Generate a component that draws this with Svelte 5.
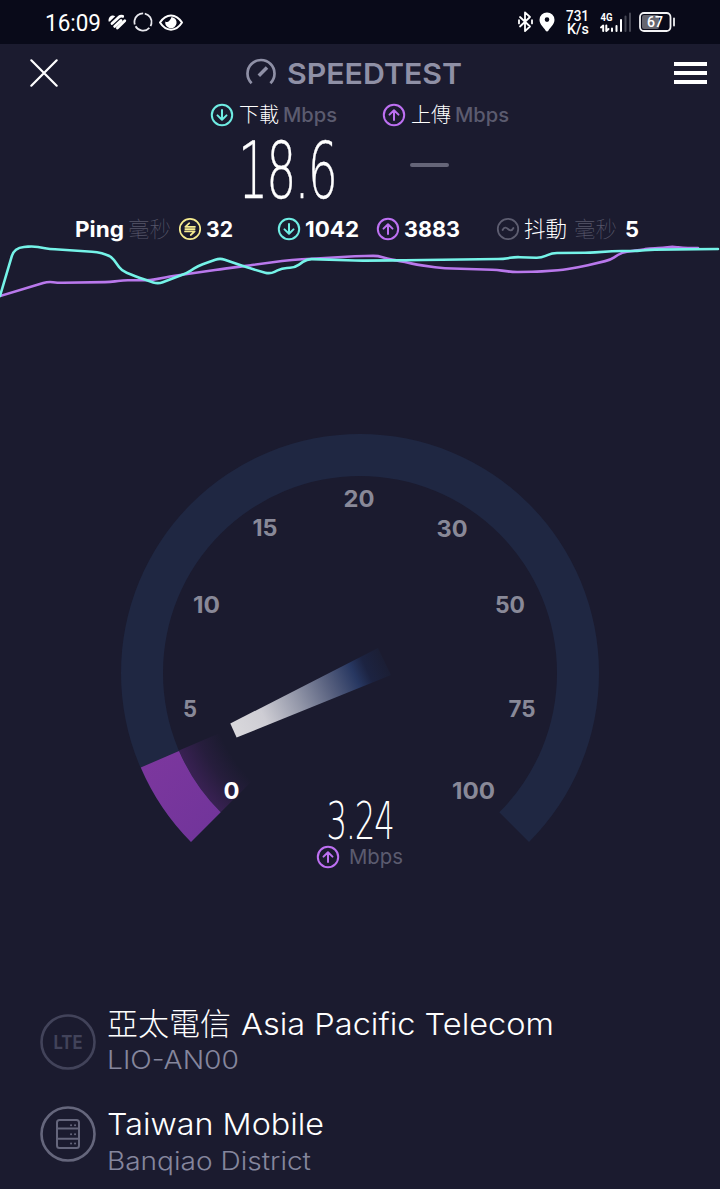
<script>
  const download = [[0,296],[13,252],[19,247.5],[33,246.2],[50,249],[97,252],[111,256],[122,271],[140,278],[158,284],[187,273],[198,266],[220,258],[247,267.5],[270,274],[282,268.3],[295,267.5],[307,259],[360,260.7],[400,260.3],[503,259],[515,257],[541,258],[552,253],[590,252.7],[617,251],[637,251],[650,249.7],[718,249]];
  const upload = [[0,296],[48,281.6],[58,282.8],[110,282],[123,280.3],[150,280.3],[170,276.5],[220,269.3],[247,265.7],[287,260.3],[307,259],[360,256],[378,255.8],[387,258.7],[400,261],[417,264.7],[440,268],[497,270],[513,272],[537,271.7],[563,270],[583,266.3],[610,260],[622,252.3],[640,250],[650,248.3],[663,248],[672,246.5],[683,248],[698,248]];

  function smooth(points) {
    let d = `M${points[0]}`;
    for (let i = 1; i < points.length - 1; i++) {
      const [px, py] = points[i - 1];
      const [x, y] = points[i];
      const [nx, ny] = points[i + 1];
      const a = Math.min(0.5, 5 / Math.hypot(x - px, y - py));
      const b = Math.min(0.5, 5 / Math.hypot(nx - x, ny - y));
      d += `L${x + (px - x) * a},${y + (py - y) * a}Q${x},${y} ${x + (nx - x) * b},${y + (ny - y) * b}`;
    }
    return d + `L${points[points.length - 1]}`;
  }

  const ticks = [
    ['0', 231.5, 791, 16, 'on'], ['5', 190, 708.5, 14, ''], ['10', 206.5, 604.5, 27, ''],
    ['15', 265, 528, 25, ''], ['20', 359, 498.5, 31, ''], ['30', 452, 529, 31, ''],
    ['50', 510, 604.5, 30, ''], ['75', 522, 708.5, 27, ''], ['100', 473.5, 791, 43, '']
  ];
</script>

{#snippet label(text, width, size, cls)}
  <svg class="label {cls}" {width} height={size} font-size={size}>
    <text x="0" y={size * 0.863} textLength={width} lengthAdjust="spacingAndGlyphs">{text}</text>
  </svg>
{/snippet}

{#snippet badge(kind)}
  <svg class="badge {kind}" width="24" height="24" viewBox="0 0 24 24">
    <circle cx="12" cy="12" r="10.2" />
    {#if kind === 'down'}
      <path d="M12 7v9.6M7.5 12.4l4.5 4.3 4.5-4.3" />
    {:else if kind === 'up'}
      <path d="M12 17V7.4M7.5 11.6L12 7.3l4.5 4.3" />
    {:else if kind === 'ping'}
      <path d="M17 9.8H7.3l4-3.6M7.3 12.1h9.4M7 14.4h9.7l-4 3.6" />
    {:else}
      <path d="M6.6 13c1.5-3.2 3.6-2.8 5.4-1s3.9 2.2 5.4-1" />
    {/if}
  </svg>
{/snippet}

<main>
  <div class="status">
    {@render label('16:09', 56, 24, 'clock')}
    <svg class="heart" width="19" height="17" viewBox="0 0 19 17">
      <path class="lobe" d="M.6 7.6C-.2 3.5 3.5.2 7.2 2.2L1.8 7.6Z" />
      <path d="M4 9.6L10.8 3.2q2-1.6 3.9-.8M6.6 12.4L13 6.4M9.4 14L16.8 6.8" />
    </svg>
    <svg class="ring" width="20" height="20" viewBox="0 0 20 20">
      <circle cx="10" cy="10" r="8.6" stroke-dasharray="16 2" transform="rotate(-78 10 10)" />
    </svg>
    <svg class="eye" width="24" height="17" viewBox="0 0 24 17">
      <path d="M1 8.5C7-1 17-1 23 8.5C17 18 7 18 1 8.5Z" />
      <path class="pupil" d="M12.5 2.9a5.7 5.7 0 1 1-6.2 4.6q2.1 1.3 3.8-.4t2.4-4.2Z" />
    </svg>
    <div class="right">
      <svg width="16" height="22" viewBox="0 0 16 22">
        <path class="bt" d="M3 6l10 9.5-5 4.6V1.4L13 6 3 15.5M2 9.2v3.2M15 9.2v3.2" />
      </svg>
      <svg class="pin" width="16" height="20" viewBox="0 0 16 20">
        <path fill-rule="evenodd" d="M8 .5a7.4 7.4 0 0 0-7.5 7.3C.5 12.5 5 15.5 6.5 18.5q1.5 2 3 0C11 15.5 15.5 12.5 15.5 7.8A7.4 7.4 0 0 0 8 .5ZM8 5.3a2.3 2.3 0 1 1 0 4.6 2.3 2.3 0 0 1 0-4.6Z" />
      </svg>
      <div class="rate">
        {@render label('731', 23, 15, 'rate-text')}
        {@render label('K/s', 22, 15, 'rate-text')}
      </div>
      <svg class="signal" width="32" height="20" viewBox="0 0 32 20">
        <text x="0.5" y="8.5" textLength="12" lengthAdjust="spacingAndGlyphs">4G</text>
        <path d="M1 15.4l2.2-1.8V19M6.3 13.5V19l2.2-2M12 19v-2.6M16.5 19v-5M21 19V8" />
        <path class="off" d="M25.5 19V4.5M30 19V1.5" />
      </svg>
      <svg class="battery" width="37" height="20" viewBox="0 0 37 20">
        <rect class="level" x="3" y="3" width="17" height="14" rx="2" />
        <rect x="1" y="1" width="30.5" height="18" rx="4" />
        <path d="M35 6.5v7" />
        <text x="8" y="15.2" textLength="16" lengthAdjust="spacingAndGlyphs">67</text>
      </svg>
    </div>
  </div>

  <header>
    <svg class="close" width="28" height="28" viewBox="0 0 28 28"><path d="M1.3 1.3l25.4 25.4M26.7 1.3L1.3 26.7" /></svg>
    <div class="brand">
      <svg width="32" height="28" viewBox="0 0 32 28">
        <path d="M6.6 24.2A13.5 13.5 0 1 1 25.4 24.2" />
        <path class="hand" d="M13.8 16.8L22 8.5" />
      </svg>
      {@render label('SPEEDTEST', 175, 29, 'semi')}
    </div>
    <div class="menu"><i></i><i></i><i></i></div>
  </header>

  <section class="results">
    <div class="result">
      <div class="caption">
        {@render badge('down')}
        {@render label('下載', 40, 20, 'cjk white')}
        {@render label('Mbps', 54, 20, 'unit')}
      </div>
      <div class="value">{@render label('18.6', 98, 78, 'digits')}</div>
    </div>
    <div class="result">
      <div class="caption">
        {@render badge('up')}
        {@render label('上傳', 40, 20, 'cjk white')}
        {@render label('Mbps', 54, 20, 'unit')}
      </div>
      <div class="dash"></div>
    </div>
  </section>

  <section class="latency">
    <div class="group">{@render label('Ping', 49, 21.5, 'bold')}{@render label('毫秒', 43, 21.5, 'cjk faint')}</div>
    <div class="group idle">{@render badge('ping')}{@render label('32', 27, 21.5, 'bold')}</div>
    <div class="group dl">{@render badge('down')}{@render label('1042', 54, 21.5, 'bold')}</div>
    <div class="group ul">{@render badge('up')}{@render label('3883', 56, 21.5, 'bold')}</div>
    <div class="group jitter">
      {@render badge('wave')}{@render label('抖動', 43, 21.5, 'cjk white')}
      {@render label('毫秒', 43, 21.5, 'cjk faint ms')}{@render label('5', 14, 21.5, 'bold five')}
    </div>
  </section>

  <svg class="chart" width="720" height="58" viewBox="0 243 720 58">
    <path stroke="#b978ec" d={smooth(upload)} />
    <path stroke="#75f3e8" d={smooth(download)} />
  </svg>

  <svg class="gauge" width="720" height="544" viewBox="0 301 720 544">
    <defs>
      <radialGradient id="glow" gradientUnits="userSpaceOnUse" cx="360" cy="673" r="198">
        <stop offset=".77" stop-color="#8d32b8" stop-opacity="0" />
        <stop offset=".88" stop-color="#8d32b8" stop-opacity=".1" />
        <stop offset="1" stop-color="#8d32b8" stop-opacity=".27" />
      </radialGradient>
      <linearGradient id="fill" x1="0" y1="0" x2="1" y2="1">
        <stop stop-color="#7d379e" /><stop offset="1" stop-color="#70349a" />
      </linearGradient>
      <linearGradient id="needle" gradientUnits="userSpaceOnUse" x1="233" y1="730" x2="385" y2="661">
        <stop offset="0" stop-color="#d9d8dc" /><stop offset=".2" stop-color="#cecdd4" />
        <stop offset=".43" stop-color="#9296a8" /><stop offset=".64" stop-color="#555e7d" />
        <stop offset=".8" stop-color="#273761" /><stop offset=".88" stop-color="#1c2341" />
        <stop offset="1" stop-color="#1b1e34" />
      </linearGradient>
    </defs>
    <path fill="#1f2742" d="M191 842A239 239 0 1 1 529 842L499.3 812.3A197 197 0 1 0 220.7 812.3Z" />
    <path fill="url(#glow)" d="M360 673L179 750.6A197 197 0 0 0 220.7 812.3Z" />
    <path fill="url(#fill)" d="M191 842A239 239 0 0 1 140.8 767.5L179 751A197 197 0 0 0 220.7 812.3Z" />
    <path fill="url(#needle)" d="M230.3 723.5L236.6 737.5L391 675L378 648Z" />
    {#each ticks as [text, x, y, w, cls]}
      <text class="tick {cls}" x={x - w / 2} y={y + 8.1} textLength={w} lengthAdjust="spacingAndGlyphs">{text}</text>
    {/each}
    <text class="current" x="326.5" y="839" textLength="67" lengthAdjust="spacingAndGlyphs">3.24</text>
  </svg>
  <div class="now">{@render badge('up')}{@render label('Mbps', 54, 20.5, 'unit light')}</div>

  <section class="providers">
    <div class="provider">
      <svg class="lte" width="56" height="56" viewBox="0 0 56 56">
        <circle cx="28" cy="28" r="26.5" />
        <text x="13.5" y="35" textLength="29" lengthAdjust="spacingAndGlyphs">LTE</text>
      </svg>
      <div class="names">
        <div class="name">{@render label('亞太電信', 124, 31, 'cjk white')}{@render label('Asia Pacific Telecom', 313, 30, 'title')}</div>
        {@render label('LIO-AN00', 132, 25, 'sub')}
      </div>
    </div>
    <div class="provider second">
      <svg class="server" width="56" height="56" viewBox="0 0 56 56">
        <circle cx="28" cy="28" r="26.5" />
        <g><rect x="17" y="14" width="22" height="28" rx="2.5" /><path d="M17 22.5h22M17 32.8h22" /><path class="dots" d="M31 19.2h.1M35 19.2h.1M31 28.2h.1M35 28.2h.1M31 37.4h.1M35 37.4h.1" /></g>
      </svg>
      <div class="names">
        <div class="name">{@render label('Taiwan Mobile', 217, 30, 'title')}</div>
        {@render label('Banqiao District', 204, 25, 'sub')}
      </div>
    </div>
  </section>
</main>

<style>
  :global(body) { background: #1b1b2f; }
  main { width: 720px; height: 1189px; overflow: hidden; background: #1b1b2f; color: #fff; font-family: Inter, "Noto Sans CJK TC", sans-serif; }
  svg { display: block; flex: none; overflow: visible; fill: none; stroke-linecap: round; stroke-linejoin: round; }
  text { fill: currentColor; stroke: none; }
  .status { display: flex; align-items: center; height: 44px; box-sizing: border-box; padding-left: 45px; background: #090a19; }
  .clock, .rate-text { font-family: Roboto, sans-serif; }
  .clock { font-weight: 400; }
  .heart { margin-left: 7px; stroke: #fff; stroke-width: 2.8; }
  .heart .lobe { fill: #fff; stroke: none; }
  .ring { margin-left: 6px; stroke: #e8e8ee; stroke-width: 1.8; stroke-linecap: butt; }
  .eye { margin-left: 6px; stroke: #fff; stroke-width: 2; }
  .eye .pupil { fill: #fff; stroke: none; }
  .right { display: flex; align-items: center; margin-left: auto; padding-right: 44px; }
  .bt { stroke: #fff; stroke-width: 1.8; }
  .pin { margin-left: 6px; fill: #fff; }
  .rate { display: flex; flex-direction: column; align-items: center; margin-left: 11px; margin-top: -2px; }
  .rate-text { font-weight: 500; height: 13px; }
  .signal { margin-left: 11px; stroke: #fff; stroke-width: 2; font: 700 11px Roboto, sans-serif; }
  .signal .off { stroke: #454653; }
  .battery { margin-left: 7px; stroke: #f2f2f4; stroke-width: 1.8; font: 500 14px Roboto, sans-serif; }
  .battery .level { fill: #66666f; stroke: none; }

  header { display: flex; align-items: center; height: 58px; box-sizing: border-box; padding: 0 13px 0 30px; }
  .close { stroke: #fff; stroke-width: 2.2; }
  .brand { display: flex; align-items: center; gap: 10px; margin-left: 187px; color: #8f90a6; }
  .brand > svg { stroke: #8f90a6; stroke-width: 2.7; stroke-linecap: butt; }
  .brand .hand { stroke-width: 3.5; }
  .semi { font-weight: 600; }
  .menu { display: flex; flex-direction: column; gap: 5px; width: 33px; margin-left: auto; }
  .menu i { height: 4.3px; background: #fff; }

  .results { display: flex; gap: 44px; height: 113px; padding-left: 210px; box-sizing: border-box; }
  .result { display: flex; flex-direction: column; width: 128px; }
  .caption { display: flex; align-items: center; height: 25px; }
  .caption .white { margin: 1px 4px 0 5px; }
  .badge { stroke-width: 2; }
  .down { stroke: #6fece3; }
  .up { stroke: #bd70f2; }
  .ping { stroke: #f6ec90; stroke-width: 1.7; }
  .wave { stroke: #5d5d70; stroke-width: 1.8; }
  .cjk { font-family: "Noto Sans CJK TC", sans-serif; font-weight: 300; }
  .white { color: #fff; }
  .faint { color: #57576a; font-weight: 100; }
  .unit { color: #5b5b6f; font-weight: 500; margin-top: 1px; }
  .light { font-weight: 400; margin-top: -1px; }
  .value { display: flex; align-items: center; height: 86px; padding-left: 28px; }
  .digits { font-family: "DejaVu Sans", sans-serif; font-weight: 200; letter-spacing: -3px; }
  .digits text { stroke: #fff; stroke-width: 0.35; }
  .dash { width: 39px; height: 4px; margin: 36px 0 0 28px; border-radius: 2px; background: #656578; }

  .latency { display: flex; align-items: center; height: 28px; padding-left: 75px; }
  .group { display: flex; align-items: center; gap: 4px; }
  .bold { font-weight: 650; }
  .idle { margin-left: 7px; }
  .dl { margin-left: 44px; }
  .ul { margin-left: 17px; }
  .jitter { margin-left: 36px; }
  .ms { margin-left: 3px; }
  .five { margin-left: 4px; }
  .chart { stroke-width: 2.6; }
  .tick { color: #898998; font-size: 22.5px; font-weight: 700; }
  .on { color: #fff; }
  .current { font-family: "DejaVu Sans", sans-serif; font-weight: 200; font-size: 52px; letter-spacing: -2px; }
  .now { display: flex; align-items: center; gap: 9px; height: 24px; padding-left: 316px; }

  .providers { display: flex; flex-direction: column; gap: 36px; padding: 145px 0 0 40px; }
  .provider { display: flex; align-items: center; gap: 11px; height: 56px; }
  .names { display: flex; flex-direction: column; gap: 8px; margin-top: -4px; }
  .second .names { margin-top: 13px; }
  .name { display: flex; align-items: center; gap: 10px; height: 31px; }
  .title { font-weight: 350; }
  .sub { color: #85869d; font-weight: 350; }
  .lte, .server { stroke: #42435a; stroke-width: 2.6; }
  .lte { color: #42435a; font-weight: 700; font-size: 19px; }
  .server { stroke: #65667c; }
  .server g { stroke-width: 2; }
</style>
